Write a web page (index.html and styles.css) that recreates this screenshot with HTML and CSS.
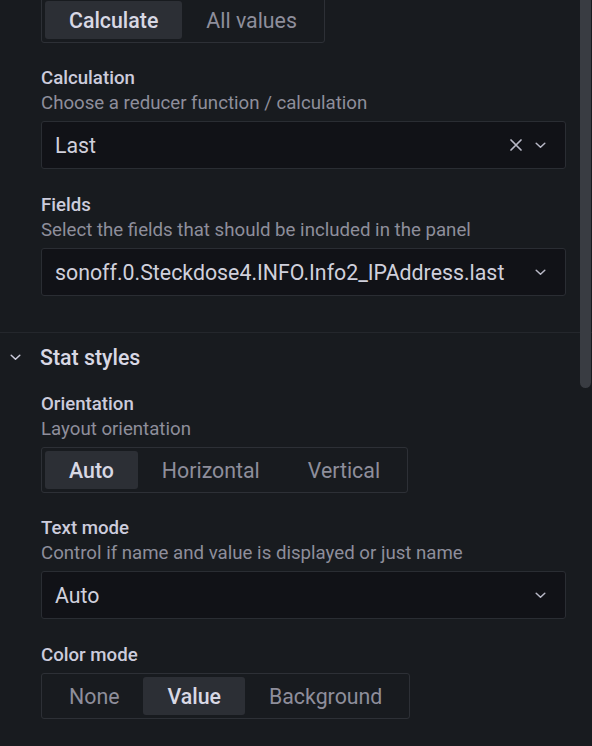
FILE: index.html
```html
<!DOCTYPE html>
<html>
<head>
<meta charset="utf-8">
<link rel="stylesheet" href="styles.css">
</head>
<body>
<div class="pane">
  <div class="section first">
    <div class="field">
      <div class="radio-group">
        <span class="rb active">Calculate</span>
        <span class="rb">All values</span>
      </div>
    </div>
    <div class="field">
      <div class="label">Calculation</div>
      <div class="desc">Choose a reducer function / calculation</div>
      <div class="select">
        <span class="value">Last</span>
        <span class="icons">
          <svg class="ic-x" width="12" height="12" viewBox="0 0 12 12"><path d="M1 1L11 11M11 1L1 11" stroke="#b8b8c6" stroke-width="1.7" fill="none" stroke-linecap="round"/></svg>
          <svg class="ic-chev" width="11" height="7" viewBox="0 0 11 7"><path d="M1.2 1.2L5.5 5.3L9.8 1.2" stroke="#b8b8c6" stroke-width="1.5" fill="none" stroke-linecap="round" stroke-linejoin="round"/></svg>
        </span>
      </div>
    </div>
    <div class="field">
      <div class="label">Fields</div>
      <div class="desc">Select the fields that should be included in the panel</div>
      <div class="select">
        <span class="value">sonoff.0.Steckdose4.INFO.Info2_IPAddress.last</span>
        <span class="icons">
          <svg class="ic-chev" width="11" height="7" viewBox="0 0 11 7"><path d="M1.2 1.2L5.5 5.3L9.8 1.2" stroke="#b8b8c6" stroke-width="1.5" fill="none" stroke-linecap="round" stroke-linejoin="round"/></svg>
        </span>
      </div>
    </div>
  </div>
  <div class="section">
    <div class="sec-head">
      <svg class="sec-chev" width="11" height="7" viewBox="0 0 11 7"><path d="M1.2 1.2L5.5 5.3L9.8 1.2" stroke="#ccccdc" stroke-width="1.5" fill="none" stroke-linecap="round" stroke-linejoin="round"/></svg>
      <span class="sec-title">Stat styles</span>
    </div>
    <div class="sec-body">
      <div class="field">
        <div class="label">Orientation</div>
        <div class="desc">Layout orientation</div>
        <div class="radio-group">
          <span class="rb active">Auto</span>
          <span class="rb">Horizontal</span>
          <span class="rb">Vertical</span>
        </div>
      </div>
      <div class="field">
        <div class="label">Text mode</div>
        <div class="desc">Control if name and value is displayed or just name</div>
        <div class="select">
          <span class="value">Auto</span>
          <span class="icons">
            <svg class="ic-chev" width="11" height="7" viewBox="0 0 11 7"><path d="M1.2 1.2L5.5 5.3L9.8 1.2" stroke="#b8b8c6" stroke-width="1.5" fill="none" stroke-linecap="round" stroke-linejoin="round"/></svg>
          </span>
        </div>
      </div>
      <div class="field">
        <div class="label">Color mode</div>
        <div class="radio-group">
          <span class="rb">None</span>
          <span class="rb active">Value</span>
          <span class="rb">Background</span>
        </div>
      </div>
    </div>
  </div>
</div>
<div class="scrollbar"></div>
</body>
</html>
```

FILE: styles.css
```css
html, body {
  margin: 0;
  padding: 0;
  background: #181b1f;
  height: 100%;
  overflow: hidden;
}
body {
  font-family: Roboto, "Liberation Sans", sans-serif;
  color: #ccccdc;
  font-size: 18.67px;
}
.pane {
  padding-right: 26px;
}
.section.first {
  margin-top: -3px;
  padding-left: 41px;
  padding-bottom: 13px;
  border-bottom: 1px solid #24272c;
  margin-right: -26px;
  padding-right: 26px;
}
.field {
  margin-bottom: 23px;
}
.field:first-child { margin-bottom: 22px; }
.label {
  font-weight: 500;
  line-height: 26px;
  color: #ccccdc;
}
.desc {
  line-height: 25px;
  color: #8e8e9b;
}
.label + .desc + .select,
.label + .desc + .radio-group,
.label + .radio-group {
  margin-top: 5px;
}
.radio-group {
  display: inline-flex;
  border: 1px solid #2d3036;
  border-radius: 3px;
  padding: 3px;
  height: 38px;
}
.rb {
  display: flex;
  align-items: center;
  padding: 0 24px;
  font-size: 21.33px;
  color: #8e8e9b;
  border-radius: 3px;
}
.rb.active {
  background: #2c2f35;
  color: #d8d8e4;
  font-weight: 500;
}
.select {
  height: 46px;
  border: 1px solid #2a2d33;
  border-radius: 3px;
  background: #111217;
  display: flex;
  align-items: center;
  padding: 0 19px 0 13px;
}
.select .value {
  flex: 1;
  font-size: 21.33px;
  color: #d0d0dc;
  white-space: nowrap;
}
.icons {
  display: flex;
  align-items: center;
  gap: 13px;
}
.sec-head {
  display: flex;
  align-items: center;
  height: 26px;
  padding: 11px 0 21px 0;
}
.sec-chev {
  margin-left: 10px;
  width: 11px;
  margin-right: 19px;
}
.sec-title {
  font-size: 21.33px;
  font-weight: 500;
  color: #d8d8e4;
}
.sec-body {
  padding-left: 41px;
}
.scrollbar {
  position: absolute;
  top: 0;
  right: 1px;
  width: 11px;
  height: 388px;
  background: #393c42;
  border-radius: 0 0 6px 6px;
}
```
